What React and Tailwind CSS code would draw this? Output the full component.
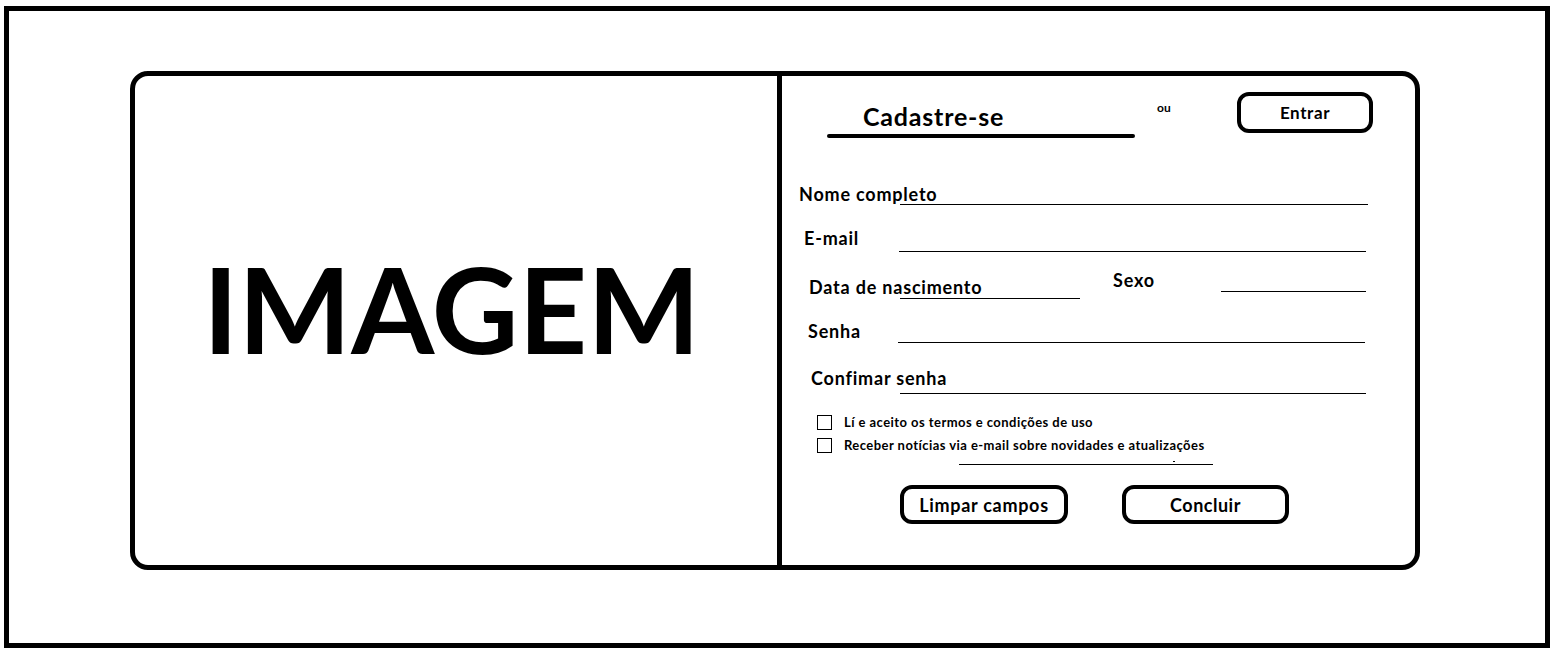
const font = { fontFamily: "Lato, 'Open Sans', sans-serif" };

function FieldLine({ width, top }) {
  return <div className="h-[1px] shrink-0 bg-black" style={{ width, marginTop: top }} />;
}

function Label({ children, width, top = 0 }) {
  return (
    <div
      className="shrink-0 whitespace-nowrap text-[18px] font-bold leading-none tracking-[0.8px]"
      style={{ width, paddingTop: top }}
    >
      {children}
    </div>
  );
}

function Checkbox({ label }) {
  return (
    <div className="flex h-[15px] items-center">
      <div className="ml-[35px] h-[15px] w-[15px] shrink-0 border border-black" />
      <span className="ml-[12px] whitespace-nowrap text-[13px] font-bold leading-none tracking-[0.45px]">
        {label}
      </span>
    </div>
  );
}

function OutlineButton({ children, className }) {
  return (
    <button
      className={`flex h-full items-center justify-center rounded-[12px] border-[4px] border-black bg-white font-bold leading-none ${className}`}
    >
      {children}
    </button>
  );
}

export default function App() {
  return (
    <div className="h-[656px] w-[1555px] overflow-hidden bg-white text-black" style={font}>
      <div className="ml-[4px] mt-[6px] h-[642px] w-[1546px] border-[5px] border-black">
        <div className="ml-[121px] mt-[60px] flex h-[499px] w-[1290px] rounded-[18px] border-[5px] border-black">
          {/* imagem */}
          <div className="flex w-[647px] shrink-0 items-center justify-center border-r-[5px] border-black pb-[26px] pr-[9px]">
            <span className="text-[119.5px] font-bold leading-none">IMAGEM</span>
          </div>

          {/* formulário */}
          <div className="flex flex-1 flex-col">
            <div className="mt-[16px] flex h-[46px] items-start pr-[42px]">
              <div className="ml-[45px] w-[308px] pt-[12px]">
                <div className="pl-[36px] text-[25px] font-bold leading-none tracking-[0.8px]">Cadastre-se</div>
                <div className="mt-[5px] h-[4px] rounded-full bg-black" />
              </div>
              <span className="ml-[22px] mt-[10px] text-[12px] font-bold leading-none">ou</span>
              <OutlineButton className="ml-auto !h-[41px] w-[136px] text-[17px] tracking-[0.6px]">Entrar</OutlineButton>
            </div>

            <div className="mt-[47px] flex h-[20px] items-start pl-[17px]">
              <Label width="101px">Nome completo</Label>
              <FieldLine width="468px" top="19px" />
            </div>

            <div className="mt-[24px] flex h-[24px] items-start pl-[22px]">
              <Label width="95px">E-mail</Label>
              <FieldLine width="467px" top="22px" />
            </div>

            <div className="mt-[18px] flex h-[28px] items-start pl-[27px]">
              <Label width="91px" top="7px">Data de nascimento</Label>
              <FieldLine width="180px" top="27px" />
              <div className="ml-[33px]">
                <Label width="108px">Sexo</Label>
              </div>
              <FieldLine width="145px" top="20px" />
            </div>

            <div className="mt-[23px] flex h-[21px] items-start pl-[26px]">
              <Label width="90px">Senha</Label>
              <FieldLine width="467px" top="20px" />
            </div>

            <div className="mt-[26px] flex h-[25px] items-start pl-[29px]">
              <Label width="89px">Confimar senha</Label>
              <FieldLine width="466px" top="24px" />
            </div>

            <div className="mt-[21px]">
              <Checkbox label="Lí e aceito os termos e condições de uso" />
            </div>
            <div className="mt-[8px]">
              <Checkbox label="Receber notícias via e-mail sobre novidades e atualizações" />
            </div>

            <div className="ml-[177px] mt-[8px] flex w-[254px] flex-col">
              <div className="ml-[214px] h-[1px] w-[2px] bg-black" />
              <div className="mt-[2px] h-[1px] bg-black" />
            </div>

            <div className="mt-[20px] flex h-[39px]">
              <OutlineButton className="ml-[118px] w-[168px] text-[18px] tracking-[0.7px]">Limpar campos</OutlineButton>
              <OutlineButton className="ml-[54px] w-[167px] text-[18px] tracking-[0.5px]">Concluir</OutlineButton>
            </div>
          </div>
        </div>
      </div>
    </div>
  );
}
